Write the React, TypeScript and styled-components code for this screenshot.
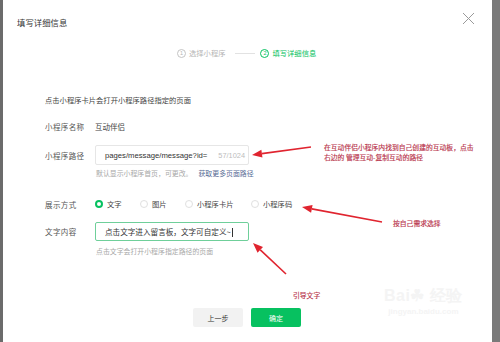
import styled, { createGlobalStyle } from 'styled-components';

const GlobalStyle = createGlobalStyle`
    html, body {
        margin: 0;
        padding: 0;
        background: #ffffff;
    }
    body {
        font-family: "Noto Sans CJK SC", "Liberation Sans", sans-serif;
    }
`;

const Screen = styled.div`
    position: relative;
    display: flex;
    width: 500px;
    height: 342px;
    overflow: hidden;
    background: #ffffff;
`;

const EdgeStrip = styled.div<{ $w: number; $c: string }>`
    flex: 0 0 ${p => p.$w}px;
    background: ${p => p.$c};
`;

const Dialog = styled.div`
    flex: 1;
    display: flex;
    flex-direction: column;
    background: #ffffff;
`;

const Header = styled.div`
    height: 44px;
    display: flex;
    align-items: center;
    justify-content: space-between;
    padding: 0 17px 0 14px;
`;

const Title = styled.div`
    font-size: 8.3px;
    color: #333333;
    letter-spacing: 0.1px;
`;

const CloseButton = styled.div`
    width: 13px;
    height: 13px;
    margin-top: -8px;
    display: flex;
`;

const Steps = styled.div`
    height: 18px;
    display: flex;
    align-items: center;
    padding-left: 174px;
`;

const Step = styled.div<{ $active?: boolean }>`
    display: flex;
    align-items: center;
    gap: 3px;
    font-size: 7.3px;
    color: ${p => (p.$active ? '#07c160' : '#b5b5b5')};
`;

const StepNum = styled.span<{ $active?: boolean }>`
    width: 7px;
    height: 7px;
    border-radius: 50%;
    border: 1px solid ${p => (p.$active ? '#07c160' : '#c4c4c4')};
    font-size: 5.5px;
    line-height: 7px;
    text-align: center;
    font-family: "Liberation Sans", sans-serif;
`;

const StepLine = styled.div`
    width: 20px;
    height: 1px;
    background: #e2e2e2;
    margin: 0 5px 0 10px;
`;

const Form = styled.div`
    display: flex;
    flex-direction: column;
    padding-left: 42px;
`;

const Intro = styled.div`
    margin-top: 32px;
    height: 12px;
    line-height: 12px;
    font-size: 7.3px;
    color: #444444;
`;

const Row = styled.div<{ $mt: number; $h: number }>`
    margin-top: ${p => p.$mt}px;
    height: ${p => p.$h}px;
    display: grid;
    grid-template-columns: 50px 1fr;
    align-items: center;
`;

const Label = styled.div`
    font-size: 7.5px;
    color: #555555;
    letter-spacing: 0.4px;
`;

const Value = styled.div`
    font-size: 7.5px;
    color: #444444;
`;

const Input = styled.div<{ $focus?: boolean }>`
    width: 154px;
    height: 100%;
    box-sizing: border-box;
    border: 1px solid ${p => (p.$focus ? '#6fcf9a' : '#e6e6e6')};
    border-radius: 2px;
    display: flex;
    align-items: center;
    justify-content: space-between;
    padding: 0 3px 0 9px;
    white-space: nowrap;
`;

const InputText = styled.span<{ $latin?: boolean }>`
    font-family: ${p => (p.$latin ? '"Liberation Sans", sans-serif' : '"Noto Sans CJK SC", sans-serif')};
    font-size: ${p => (p.$latin ? '7.7px' : '7.6px')};
    color: #333333;
    white-space: nowrap;
`;

const Caret = styled.span`
    display: inline-block;
    width: 1px;
    height: 9px;
    background: #333333;
    margin-left: 1px;
    vertical-align: middle;
`;

const Counter = styled.span`
    font-family: "Liberation Sans", sans-serif;
    font-size: 7.4px;
    color: #bdbdbd;
`;

const Hint = styled.div<{ $mt: number }>`
    margin-top: ${p => p.$mt}px;
    margin-left: 51px;
    height: 12px;
    line-height: 12px;
    font-size: 6.9px;
    color: #a8a8a8;
`;

const HintLink = styled.span`
    color: #576b95;
    margin-left: 6px;
`;

const Radios = styled.div`
    display: flex;
    align-items: center;
`;

const RadioItem = styled.div<{ $w: number }>`
    width: ${p => p.$w}px;
    display: flex;
    align-items: center;
    gap: 4px;
    font-size: 7.3px;
    color: #444444;
`;

const RadioDot = styled.span<{ $on?: boolean }>`
    width: 8px;
    height: 8px;
    box-sizing: border-box;
    border-radius: 50%;
    border: ${p => (p.$on ? '2.5px solid #07c160' : '1px solid #e0e0e0')};
    background: #ffffff;
`;

const Buttons = styled.div`
    margin-top: 51px;
    display: flex;
    gap: 8px;
    padding-left: 190px;
`;

const Button = styled.div<{ $primary?: boolean }>`
    width: 50px;
    height: 19px;
    border-radius: 2px;
    display: flex;
    align-items: center;
    justify-content: center;
    font-size: 7px;
    background: ${p => (p.$primary ? '#07c160' : '#f2f2f2')};
    color: ${p => (p.$primary ? '#ffffff' : '#333333')};
`;

const Overlay = styled.svg`
    position: absolute;
    left: 0;
    top: 0;
    pointer-events: none;
`;

const Note = styled.div<{ $x: number; $y: number }>`
    position: absolute;
    left: ${p => p.$x}px;
    top: ${p => p.$y}px;
    font-size: 6.8px;
    line-height: 9.5px;
    color: #b8324a;
    white-space: nowrap;
    -webkit-text-stroke: 0.15px #b8324a;
`;

const Watermark = styled.div`
    position: absolute;
    left: 384px;
    top: 286px;
    display: flex;
    flex-direction: column;
    align-items: center;
    color: #f4f4f4;
    font-family: "Liberation Sans", sans-serif;
`;

const WaterLogo = styled.div`
    font-size: 16px;
    font-weight: bold;
    letter-spacing: 0.5px;
`;

const WaterSub = styled.div`
    font-size: 8px;
    font-weight: bold;
`;

type ArrowProps = { x1: number; y1: number; x2: number; y2: number };

function Arrow({ x1, y1, x2, y2 }: ArrowProps) {
    const a = Math.atan2(y2 - y1, x2 - x1);
    const len = 10;
    const w = 4;
    const bx = x2 - len * Math.cos(a);
    const by = y2 - len * Math.sin(a);
    const px = -Math.sin(a) * w;
    const py = Math.cos(a) * w;
    return (
        <g>
            <line x1={x1} y1={y1} x2={bx} y2={by} stroke="#e0242f" strokeWidth={1.6} />
            <polygon points={`${x2},${y2} ${bx + px},${by + py} ${bx - px},${by - py}`} fill="#e0242f" />
        </g>
    );
}

const radios = [
    { label: '文字', w: 45, on: true },
    { label: '图片', w: 45 },
    { label: '小程序卡片', w: 66 },
    { label: '小程序码', w: 50 },
];

export default function App() {
    return (
        <>
            <GlobalStyle />
            <Screen>
                <EdgeStrip $w={3} $c="#6b6b6b" />
                <Dialog>
                    <Header>
                        <Title>填写详细信息</Title>
                        <CloseButton>
                            <svg width="13" height="13" viewBox="0 0 13 13">
                                <path d="M1 1 L12 12 M12 1 L1 12" stroke="#9a9a9a" strokeWidth="1" />
                            </svg>
                        </CloseButton>
                    </Header>
                    <Steps>
                        <Step>
                            <StepNum>1</StepNum>
                            选择小程序
                        </Step>
                        <StepLine />
                        <Step $active>
                            <StepNum $active>2</StepNum>
                            填写详细信息
                        </Step>
                    </Steps>
                    <Form>
                        <Intro>点击小程序卡片会打开小程序路径指定的页面</Intro>
                        <Row $mt={13} $h={14}>
                            <Label>小程序名称</Label>
                            <Value>互动伴侣</Value>
                        </Row>
                        <Row $mt={12} $h={20}>
                            <Label>小程序路径</Label>
                            <Input>
                                <InputText $latin>pages/message/message?id=</InputText>
                                <Counter>57/1024</Counter>
                            </Input>
                        </Row>
                        <Hint $mt={2}>
                            默认显示小程序首页，可更改。
                            <HintLink>获取更多页面路径</HintLink>
                        </Hint>
                        <Row $mt={18} $h={14}>
                            <Label>展示方式</Label>
                            <Radios>
                                {radios.map(r => (
                                    <RadioItem key={r.label} $w={r.w}>
                                        <RadioDot $on={r.on} />
                                        {r.label}
                                    </RadioItem>
                                ))}
                            </Radios>
                        </Row>
                        <Row $mt={11} $h={19}>
                            <Label>文字内容</Label>
                            <Input $focus>
                                <InputText>
                                    点击文字进入留言板，文字可自定义~
                                    <Caret />
                                </InputText>
                            </Input>
                        </Row>
                        <Hint $mt={4}>点击文字会打开小程序指定路径的页面</Hint>
                    </Form>
                    <Buttons>
                        <Button>上一步</Button>
                        <Button $primary>确定</Button>
                    </Buttons>
                </Dialog>
                <EdgeStrip $w={8} $c="#7a7a7a" />

                <Watermark>
                    <WaterLogo>Bai&#x2618; 经验</WaterLogo>
                    <WaterSub>jingyan.baidu.com</WaterSub>
                </Watermark>

                <Overlay width="500" height="342" viewBox="0 0 500 342">
                    <Arrow x1={311} y1={147} x2={252} y2={155} />
                    <Arrow x1={382} y1={222} x2={302} y2={207} />
                    <Arrow x1={286} y1={274} x2={253} y2={243} />
                </Overlay>
                <Note $x={324} $y={143}>
                    在互动伴侣小程序内找到自己创建的互动板，点击
                    <br />
                    右边的 管理互动-复制互动的路径
                </Note>
                <Note $x={393} $y={219}>按自己需求选择</Note>
                <Note $x={293} $y={291}>引导文字</Note>
            </Screen>
        </>
    );
}
